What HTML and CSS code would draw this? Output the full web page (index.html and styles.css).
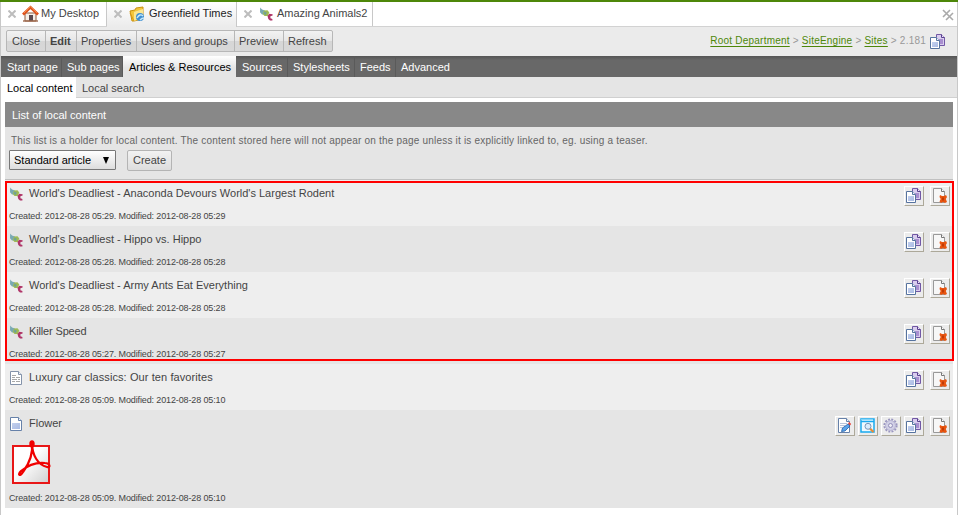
FILE: index.html
```
<!DOCTYPE html>
<html lang="en">
<head>
<meta charset="utf-8">
<title>Greenfield Times</title>
<link rel="stylesheet" href="styles.css">
</head>
<body>
<svg class="defs" width="0" height="0">
<defs>
<linearGradient id="g-page" x1="0" y1="0" x2="1" y2="1"><stop offset="0" stop-color="#c3d0ee"/><stop offset="1" stop-color="#a9bbe4"/></linearGradient>
<linearGradient id="g-pdf" x1="1" y1="1" x2="0" y2="0"><stop offset="0" stop-color="#cfcfcf"/><stop offset=".6" stop-color="#fff"/></linearGradient>
<symbol id="close" viewBox="0 0 8 8"><path d="M.5 .5l7 7M7.500 .5L.5 7.500" stroke="#bdbdbd" stroke-width="2" fill="none"/></symbol>
<symbol id="home" viewBox="0 0 17 17"><path d="M3 8h11v8H3z" fill="#f6efe8" stroke="#8b5a3c"/><path d="M7 10h4v6H7z" fill="#5a4a50"/><path d="M1 16h15" stroke="#a06a50" stroke-width="1.4"/><path d="M1 9.500L8.500 2.300l7.500 7.200" fill="none" stroke="#e0501a" stroke-width="2.700"/><path d="M2 8L8.500 1.600 15 8" fill="none" stroke="#f79a55" stroke-width=".8"/></symbol>
<symbol id="site" viewBox="0 0 16 16"><path d="M1 5l5-1 1-2 7-1v12l-9 2H3z" fill="#f3c63b" stroke="#c9920f"/><path d="M5 6l9-3v9l-9 3z" fill="#fbe691"/><path d="M1 7l4 8" stroke="#d99a16"/><circle cx="11" cy="11" r="4" fill="#3f8fd2"/><path d="M8 12q3-5 6-2M11 14q2-2 4-2" stroke="#c8e9f8" stroke-width="1.400" fill="none"/></symbol>
<symbol id="article" viewBox="0 0 14 14"><path d="M1.200 .6L3 2.600l3 1-1 4H3L1 5.300z" fill="#79a9b3"/><path d="M5 3.500l3.500-.3 1.800 2.300-1.500 3.500H5.500L3.800 7z" fill="#9fba55"/><path d="M5.500 4.500l2.200 1-.7 2.500-2.200-1z" fill="#6fa295"/><path d="M13.600 7.200l-3.400-.5L8.500 9l.8 3 1.700 1.600h2.400v-1.500l-2-.8v-2l2.200-.7z" fill="#b03568"/></symbol>
<symbol id="copy" viewBox="0 0 15 15"><path d="M6.500 .5h5l3 3v8h-8z" fill="#d9cdee" stroke="#7258a5"/><path d="M11.500 .5v3h3" fill="#eee6fa" stroke="#59408f"/><path d="M9 5h4v5H9z" fill="#a98fd0"/><path d="M.5 3.500h6l3 3v8h-9z" fill="#fff" stroke="#56739f"/><path d="M6.500 3.500v3h3" fill="#edf2fb" stroke="#56739f"/><path d="M2 8h6v5H2z" fill="url(#g-page)"/></symbol>
<symbol id="delete" viewBox="0 0 15 15"><path d="M1.500 .5h8l3 3v11h-11z" fill="#f7f7f7" stroke="#999"/><path d="M9.500 .5v3h3" fill="#fff" stroke="#777"/><path d="M8 7l2 1h2l2-1 1 2-1.200 2 1.200 3-2 1-2-1-2 1-1.500-1.500L8.700 11 7.500 9z" fill="#e85510"/><path d="M10 9.500h2v3h-2z" fill="#c13b06"/></symbol>
<symbol id="doc" viewBox="0 0 14 14"><path d="M1.500 .5h8l3 3v10h-11z" fill="#fff" stroke="#6681a9"/><path d="M9.500 .5v3h3" fill="#eef3fa" stroke="#6681a9"/><path d="M3 6h8v6H3z" fill="url(#g-page)"/></symbol>
<symbol id="text" viewBox="0 0 14 14"><path d="M1.500 .5h8l3 3v10h-11z" fill="#fff" stroke="#8493aa"/><path d="M9.500 .5v3h3" fill="#eef3fa" stroke="#8493aa"/><path d="M3 4.500h4M3 6.500h3m1 0h4M3 8.500h5m1 0h2M3 10.500h3m1 0h4" stroke="#a8a8a8"/></symbol>
<symbol id="edit" viewBox="0 0 15 15"><path d="M1.500 .5h8l3 3v11h-11z" fill="#fff" stroke="#6681a9"/><path d="M9.500 .5v3h3" fill="#eef3fa" stroke="#6681a9"/><path d="M3 5.500h7M3 7.500h5M3 9.500h3" stroke="#b9c5dc"/><path d="M4.500 13.500l1-3.500 5.500-4 2 2-5 5z" fill="#5ba4ea" stroke="#245fa8" stroke-width=".8"/><path d="M11 5.500l1.200-1.500 2 2L13 7.500z" fill="#e8453c"/></symbol>
<symbol id="view" viewBox="0 0 15 15"><path d="M1 1h13v13H1z" fill="#eef9ff" stroke="#19a9ee" stroke-width="1.500"/><path d="M1 3.500h13" stroke="#19a9ee" stroke-width="1.500"/><path d="M1 1.700h12" stroke="#8fdafb"/><path d="M10 10.500l3.500 3.500" stroke="#e98a35" stroke-width="2.200"/><circle cx="8" cy="8.300" r="3" fill="#d9ecfc" stroke="#7996b8"/></symbol>
<symbol id="gear" viewBox="0 0 15 15"><circle cx="7.500" cy="7.500" r="6.200" fill="none" stroke="#9a96c0" stroke-width="1.800" stroke-dasharray="1.950 1.300"/><circle cx="7.500" cy="7.500" r="5" fill="#d1d0e6" stroke="#b3b0d1"/><circle cx="7.500" cy="7.500" r="2" fill="#eeeef5" stroke="#9490bb"/></symbol>
<symbol id="pdf" viewBox="0 0 40 44"><path d="M2 6h36v37H2z" fill="url(#g-pdf)" stroke="#e81717" stroke-width="2"/><path d="M21 3c0 12 6 22 15 24 4 1 3-4-2-4-10-1-18 3-24 8-4 4-1 6 2 1 6-8 10-19 9-29z" fill="none" stroke="#f00000" stroke-width="2.200"/><ellipse cx="21" cy="4" rx="2.700" ry="3.700" fill="#f00000"/></symbol>
</defs>
</svg>
<div class="app">
  <div class="tabs">
    <div class="tab tab-home"><svg class="x"><use href="#close"/></svg><svg class="tab-icon big"><use href="#home"/></svg><span>My Desktop</span></div>
    <div class="tab tab-site active"><svg class="x"><use href="#close"/></svg><svg class="tab-icon"><use href="#site"/></svg><span>Greenfield Times</span></div>
    <div class="tab tab-article"><svg class="x"><use href="#close"/></svg><svg class="tab-icon small"><use href="#article"/></svg><span>Amazing Animals2</span></div>
    <svg class="close-all" viewBox="0 0 12 12"><path d="M1 1l7 7M8 1L1 8M4 4l7 7M11 4l-7 7" stroke="#aaa" stroke-width="1.600"/></svg>
  </div>
  <div class="toolbar">
    <div class="buttons"><span class="b-close">Close</span><span class="b-edit">Edit</span><span class="b-props">Properties</span><span class="b-users">Users and groups</span><span class="b-view">Preview</span><span class="b-refresh">Refresh</span></div>
    <div class="crumbs"><a>Root Department</a> &gt; <a>SiteEngine</a> &gt; <a>Sites</a> &gt; 2.181</div>
    <svg class="crumb-icon"><use href="#copy"/></svg>
  </div>
  <div class="nav"><span>Start page</span><span>Sub pages</span><span class="active">Articles &amp; Resources</span><span>Sources</span><span>Stylesheets</span><span>Feeds</span><span>Advanced</span></div>
  <div class="subnav"><span class="active">Local content</span><span>Local search</span></div>
  <div class="panel">
    <h1>List of local content</h1>
    <div class="intro">
      <p>This list is a holder for local content. The content stored here will not appear on the page unless it is explicitly linked to, eg. using a teaser.</p>
      <div class="form"><div class="select"><span>Standard article</span><i></i></div><div class="create">Create</div></div>
    </div>
    <div class="rows">
      <div class="row"><div class="title"><svg><use href="#article"/></svg><span>World's Deadliest - Anaconda Devours World's Largest Rodent</span></div><div class="actions"><svg><use href="#copy"/></svg><svg class="del"><use href="#delete"/></svg></div><p class="dates">Created: 2012-08-28 05:29. Modified: 2012-08-28 05:29</p></div>
      <div class="row"><div class="title"><svg><use href="#article"/></svg><span>World's Deadliest - Hippo vs. Hippo</span></div><div class="actions"><svg><use href="#copy"/></svg><svg class="del"><use href="#delete"/></svg></div><p class="dates">Created: 2012-08-28 05:28. Modified: 2012-08-28 05:28</p></div>
      <div class="row"><div class="title"><svg><use href="#article"/></svg><span>World's Deadliest - Army Ants Eat Everything</span></div><div class="actions"><svg><use href="#copy"/></svg><svg class="del"><use href="#delete"/></svg></div><p class="dates">Created: 2012-08-28 05:28. Modified: 2012-08-28 05:28</p></div>
      <div class="row"><div class="title"><svg><use href="#article"/></svg><span class="tight">Killer Speed</span></div><div class="actions"><svg><use href="#copy"/></svg><svg class="del"><use href="#delete"/></svg></div><p class="dates">Created: 2012-08-28 05:27. Modified: 2012-08-28 05:27</p></div>
      <div class="row"><div class="title"><svg><use href="#text"/></svg><span class="loose">Luxury car classics: Our ten favorites</span></div><div class="actions"><svg><use href="#copy"/></svg><svg class="del"><use href="#delete"/></svg></div><p class="dates">Created: 2012-08-28 05:09. Modified: 2012-08-28 05:10</p></div>
      <div class="row tall"><div class="title"><svg><use href="#doc"/></svg><span>Flower</span></div><div class="actions"><svg><use href="#edit"/></svg><svg><use href="#view"/></svg><svg><use href="#gear"/></svg><svg><use href="#copy"/></svg><svg class="del"><use href="#delete"/></svg></div><svg class="pdf"><use href="#pdf"/></svg><p class="dates">Created: 2012-08-28 05:09. Modified: 2012-08-28 05:10</p></div>
      <div class="highlight"></div>
    </div>
  </div>
</div>
</body>
</html>
```

FILE: styles.css
```
* { box-sizing: border-box; }
body { margin: 0; background: #fff; font: 11px/13px "Liberation Sans", Arial, sans-serif; color: #444; white-space: nowrap; overflow: hidden; }
svg { display: block; flex: none; }
.defs { position: absolute; }
.app { height: 515px; border: solid #c8c8c8; border-width: 0 1px; position: relative; }
.app::before { content: ""; display: block; height: 2px; margin: 0 -1px; background: #4d8709; }
.tabs { display: flex; height: 25px; border-bottom: 1px solid #d2d2d2; }
.tab { display: flex; align-items: center; height: 24px; padding: 0 0 1px 7px; border-right: 1px solid #c8c8c8; }
.tab.active { height: 25px; padding-bottom: 2px; background: linear-gradient(#fff, #ebebeb); color: #222; }
.tab-home { width: 106px; }
.tab-site { width: 130px; }
.tab-article { width: 136px; }
.x { width: 8px; height: 8px; margin-top: 1px; }
.tab-icon { width: 16px; height: 16px; margin: 0 4px 0 7px; }
.tab-icon.big { width: 17px; height: 17px; margin: 0 2px 0 6px; }
.tab-icon.small { width: 14px; height: 14px; margin: 0 4px 0 7px; }
.close-all { width: 12px; height: 12px; margin: 7px 3px 0 auto; }
.toolbar { display: flex; height: 29px; padding: 3px 12px 0 5px; background: #ebebeb; }
.buttons { display: flex; height: 22px; border: 1px solid #b7b7b7; border-radius: 2px; background: linear-gradient(#f2f2f2, #e6e6e6 50%, #d6d6d6 51%, #d8d8d8); }
.buttons span { padding: 4px 0 0 4px; border-right: 1px solid #b7b7b7; }
.buttons .b-close { width: 39px; padding-left: 5px; }
.buttons .b-edit { width: 31px; font-weight: 700; }
.buttons .b-props { width: 60px; }
.buttons .b-users { width: 98px; }
.buttons .b-view { width: 49px; }
.buttons .b-refresh { width: 48px; border: 0; }
.crumbs { margin: 4px 4px 0 auto; font-size: 10px; color: #999; letter-spacing: .22px; }
.crumbs a { color: #4d8709; text-decoration: underline; text-underline-offset: 2px; }
.crumb-icon { width: 15px; height: 15px; margin-top: 4px; }
.nav { display: flex; height: 21px; background: linear-gradient(#555, #686868 4px); color: #fff; }
.nav span { width: 61px; padding: 5px 0 0 5px; border-right: 1px solid #5a5a5a; }
.nav span:first-child { padding-left: 6px; }
.nav span:nth-child(4) { width: 52px; padding-left: 6px; }
.nav span:nth-child(5) { width: 67px; }
.nav span:nth-child(6) { width: 41px; }
.nav span:last-child { border: 0; }
.nav span.active { width: 113px; padding-left: 6px; background: linear-gradient(#fff, #e5e5e5 12px); color: #000; border: 0; }
.subnav { display: flex; height: 21px; background: #e5e5e5; border-bottom: 1px solid #d0d0d0; }
.subnav span { padding: 5px 6px 0; }
.subnav .active { width: 75px; height: 21px; background: #fff; color: #000; }
.panel { margin: 4px 4px 0; width: 948px; }
h1 { height: 25px; margin: 0; padding: 7px; background: #888; color: #fff; font-size: 11px; font-weight: 400; }
.intro { height: 53px; padding: 7px 4px 0; background: #e5e5e5; border-bottom: 1px solid #c0c0c0; }
.intro p { margin: 0 2px; font-size: 10px; letter-spacing: .195px; color: #666; }
.form { display: flex; gap: 11px; margin-top: 3px; }
.select { display: flex; align-items: center; justify-content: space-between; width: 107px; height: 20px; padding: 0 6px 0 4px; border: 1px solid #777; border-radius: 1px; background: linear-gradient(#fff, #ddd); color: #000; }
.select i { border: solid transparent; border-width: 7px 3.5px 0; border-top-color: #000; }
.create { width: 45px; height: 21px; padding-top: 3px; border: 1px solid #b4b4b4; border-radius: 2px; background: linear-gradient(#f2f2f2, #ddd); text-align: center; }
.rows { position: relative; }
.row { display: grid; grid-template-columns: 1fr auto; grid-template-rows: 30px 16px; height: 46px; padding: 0 3px 0 4px; background: #eee; }
.row:nth-child(even) { background: #e5e5e5; }
.row.tall { grid-template-rows: 30px 52px 16px; height: 98px; }
.title { display: flex; padding-top: 7px; }
.title svg { width: 14px; height: 14px; margin-right: 6px; }
.title .tight { letter-spacing: -.15px; }
.title .loose { letter-spacing: .09px; }
.actions { display: flex; gap: 3px; padding-top: 6px; }
.actions svg { width: 20px; height: 20px; padding: 1px 2px 2px 1px; border: 1px solid; border-color: #fff #aca899 #aca899 #fff; background: #ececec; }
.actions .del { margin-left: 3px; }
.dates { grid-column: 1 / 3; margin: 0; font-size: 9px; letter-spacing: -.13px; }
.pdf { grid-column: 1 / 3; width: 40px; height: 44px; margin: 0 0 0 2px; }
.highlight { position: absolute; left: 0; top: 1px; width: 949px; height: 180px; border: 2px solid #f00; }
```
